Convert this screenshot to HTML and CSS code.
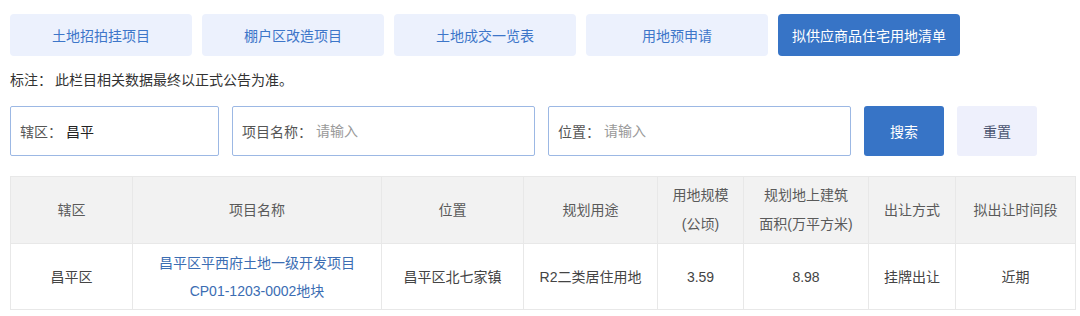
FILE: index.html
```html
<!DOCTYPE html>
<html lang="zh-CN">
<head>
    <meta charset="UTF-8">
    <meta name="viewport" content="width=device-width, initial-scale=1.0">
    <title>拟供应商品住宅用地清单</title>
    <link rel="stylesheet" href="styles.css">
</head>
<body>
    <div class="page">
        <div class="tabs">
            <a class="tab" href="#">土地招拍挂项目</a>
            <a class="tab" href="#">棚户区改造项目</a>
            <a class="tab" href="#">土地成交一览表</a>
            <a class="tab" href="#">用地预申请</a>
            <a class="tab active" href="#">拟供应商品住宅用地清单</a>
        </div>

        <p class="note">标注：<span>此栏目相关数据最终以正式公告为准。</span></p>

        <form class="search">
            <label class="field field-district">
                <span>辖区：</span>
                <input type="text" value="昌平">
            </label>
            <label class="field field-wide">
                <span>项目名称：</span>
                <input type="text" placeholder="请输入">
            </label>
            <label class="field field-wide">
                <span>位置：</span>
                <input type="text" placeholder="请输入">
            </label>
            <button type="submit" class="btn btn-search">搜索</button>
            <button type="reset" class="btn btn-reset">重置</button>
        </form>

        <table class="list">
            <colgroup>
                <col style="width: 122px">
                <col style="width: 249px">
                <col style="width: 142px">
                <col style="width: 134px">
                <col style="width: 86px">
                <col style="width: 125px">
                <col style="width: 87px">
                <col style="width: 120px">
            </colgroup>
            <thead>
                <tr>
                    <th>辖区</th>
                    <th>项目名称</th>
                    <th>位置</th>
                    <th>规划用途</th>
                    <th>用地规模<br>(公顷)</th>
                    <th>规划地上建筑<br>面积(万平方米)</th>
                    <th>出让方式</th>
                    <th>拟出让时间段</th>
                </tr>
            </thead>
            <tbody>
                <tr>
                    <td>昌平区</td>
                    <td><a href="#">昌平区平西府土地一级开发项目<br>CP01-1203-0002地块</a></td>
                    <td>昌平区北七家镇</td>
                    <td>R2二类居住用地</td>
                    <td>3.59</td>
                    <td>8.98</td>
                    <td>挂牌出让</td>
                    <td>近期</td>
                </tr>
            </tbody>
        </table>
    </div>
</body>
</html>
```

FILE: styles.css
```css
body {
    margin: 0;
    font-family: "Liberation Sans", "Noto Sans CJK SC", sans-serif;
    font-size: 14px;
    color: #333;
    background-color: #fff;
}

.page {
    padding: 14px 10px 0;
}

.tabs {
    display: flex;
    gap: 10px;
}

.tab {
    width: 182px;
    height: 42px;
    display: flex;
    align-items: center;
    justify-content: center;
    background-color: #ecf1fd;
    color: #3d76c9;
    border-radius: 4px;
    text-decoration: none;
}

.tab.active {
    background-color: #3774c6;
    color: #fff;
}

.note {
    margin: 14px 0 16px;
    line-height: 20px;
    color: #333;
}

.note span {
    margin-left: 3px;
}

.search {
    display: flex;
    gap: 13px;
    height: 50px;
}

.field {
    display: flex;
    align-items: center;
    box-sizing: border-box;
    height: 50px;
    padding: 0 9px;
    border: 1px solid #9cb8e4;
    border-radius: 2px;
    color: #555;
}

.field-district {
    width: 209px;
}

.field-wide {
    width: 303px;
}

.field span {
    white-space: nowrap;
    margin-right: 4px;
}

.field input {
    flex: 1;
    min-width: 0;
    border: none;
    outline: none;
    padding: 0;
    font: inherit;
    color: #222;
    background: transparent;
}

.field input::placeholder {
    color: #999;
}

.btn {
    width: 80px;
    height: 50px;
    border: none;
    border-radius: 3px;
    font: inherit;
    cursor: pointer;
}

.btn-search {
    background-color: #3774c6;
    color: #fff;
}

.btn-reset {
    background-color: #eef0fc;
    color: #4a5470;
}

.list {
    margin-top: 20px;
    width: 1065px;
    border-collapse: collapse;
    table-layout: fixed;
    text-align: center;
}

.list th,
.list td {
    border: 1px solid #e8e8e8;
    padding: 0 4px;
    line-height: 29px;
}

.list th {
    height: 66px;
    background-color: #f2f2f2;
    font-weight: normal;
    color: #5a5a5a;
}

.list td {
    height: 65px;
    color: #444;
    line-height: 28px;
}

.list td a {
    color: #3b6db3;
    text-decoration: none;
}
```
